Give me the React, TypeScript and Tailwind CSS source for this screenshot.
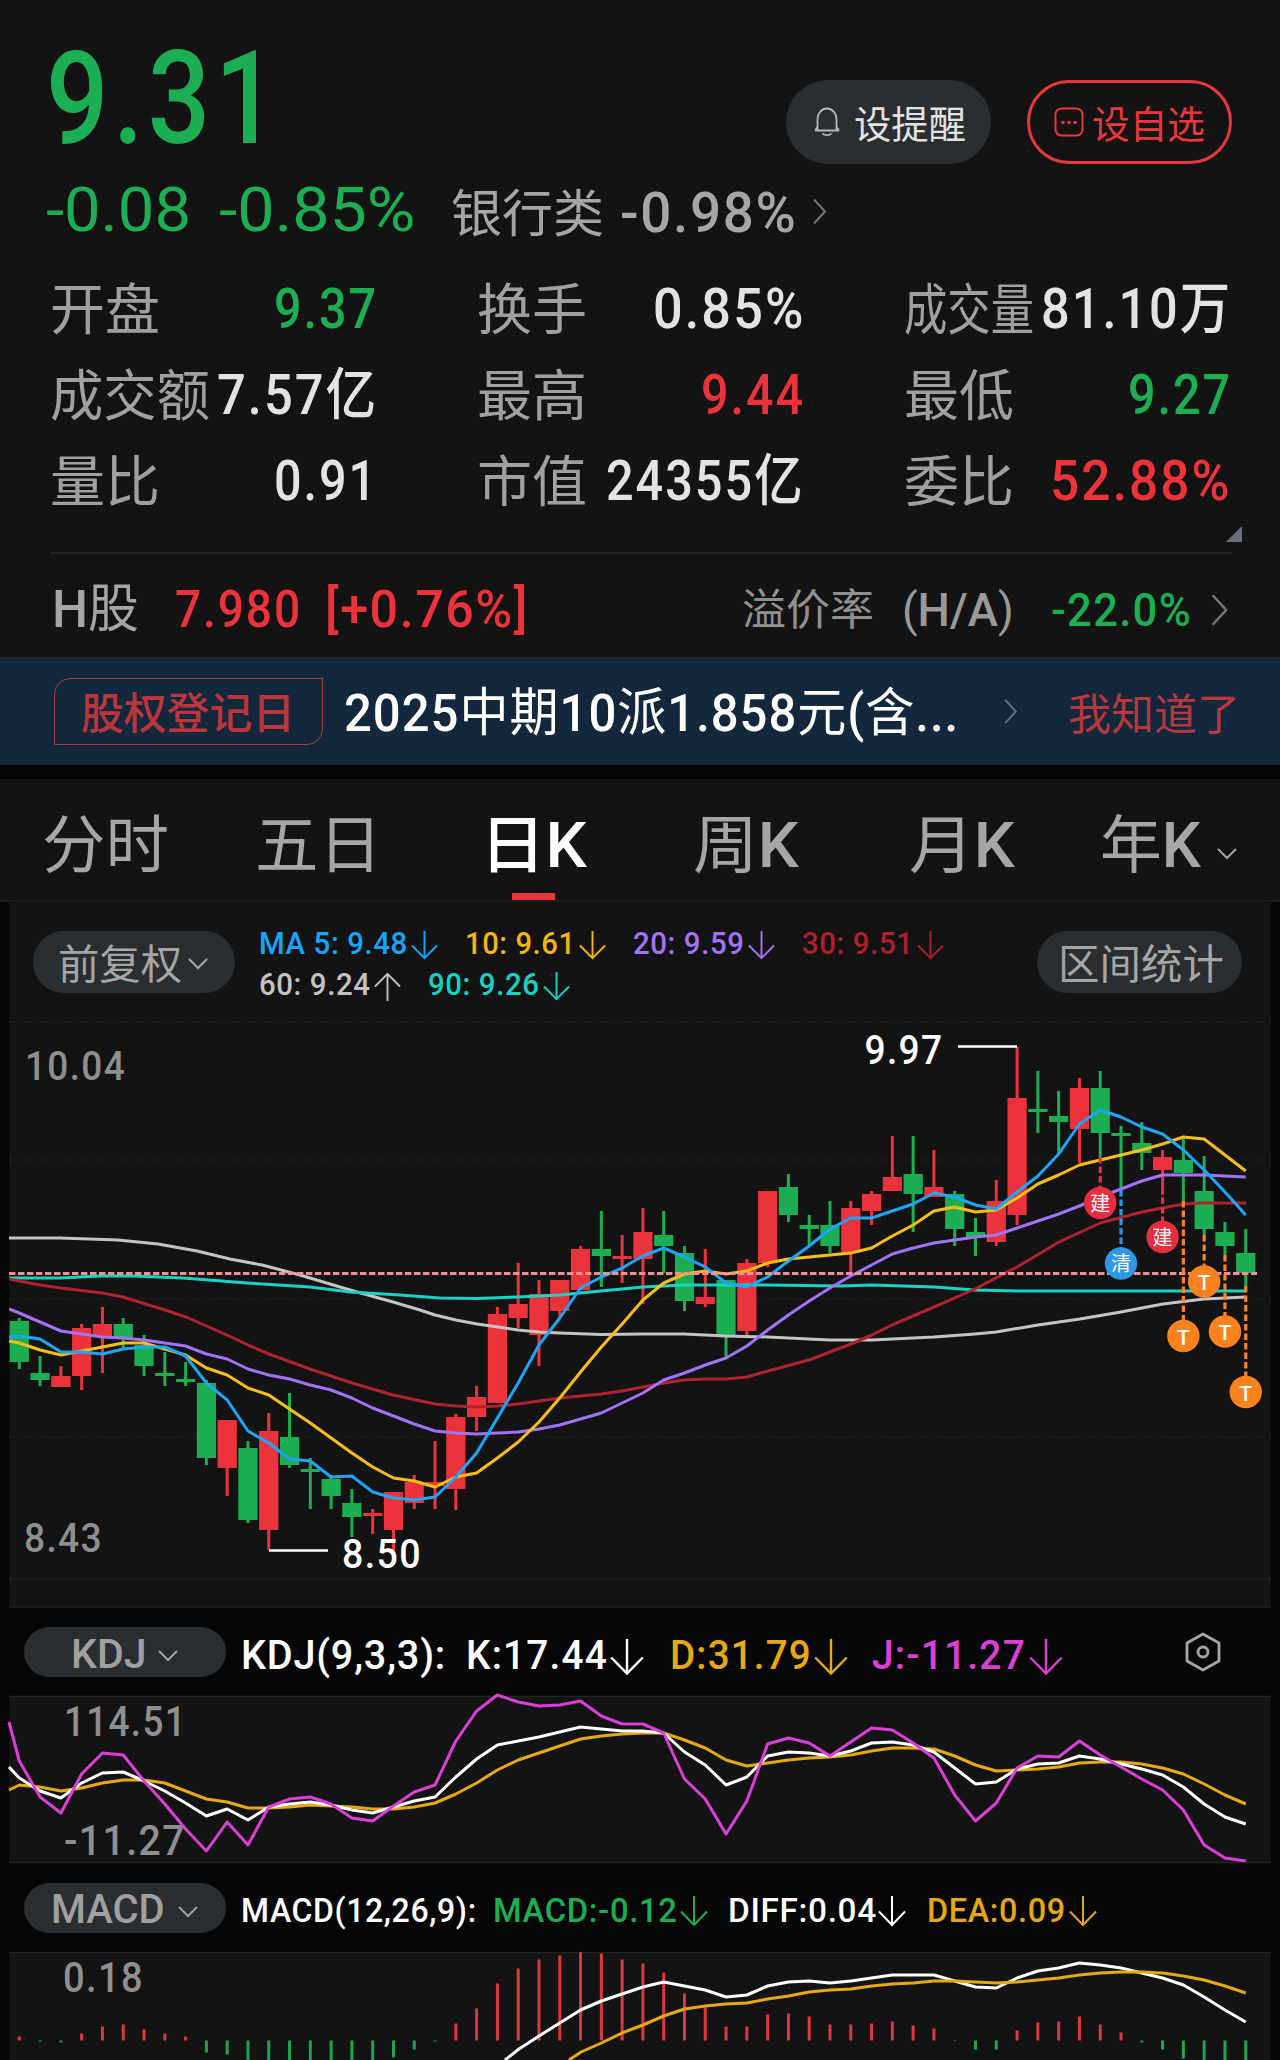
import { useLayoutEffect, useRef, useState } from "react";
import type { ReactNode } from "react";

const UP = "#ec333c";
const DOWN = "#1cae52";

// x position of each trading day
const dayX = (i: number) => 19.3 + i * 20.787;

// [direction, high, body top, body bottom, low]
const candles: [number, number, number, number, number][] = [
  [0, 1318, 1321, 1362, 1369], [0, 1356, 1373, 1380, 1386], [1, 1366, 1376, 1387, 1387],
  [1, 1324, 1328, 1376, 1390], [1, 1307, 1324, 1337, 1373], [0, 1318, 1324, 1338, 1348],
  [0, 1335, 1345, 1366, 1376], [0, 1352, 1373, 1376, 1386], [0, 1362, 1379, 1382, 1386],
  [0, 1380, 1383, 1458, 1465], [1, 1420, 1420, 1468, 1496], [0, 1441, 1448, 1520, 1523],
  [1, 1413, 1431, 1530, 1550], [0, 1393, 1437, 1465, 1468], [0, 1458, 1469, 1472, 1509],
  [0, 1475, 1479, 1496, 1509], [0, 1489, 1503, 1517, 1537], [1, 1509, 1513, 1516, 1534],
  [1, 1492, 1492, 1530, 1550], [1, 1475, 1482, 1503, 1509], [1, 1441, 1482, 1486, 1509],
  [1, 1414, 1417, 1489, 1510], [1, 1386, 1397, 1417, 1431], [1, 1307, 1314, 1403, 1403],
  [1, 1263, 1304, 1318, 1328], [1, 1280, 1294, 1335, 1366], [1, 1280, 1280, 1311, 1317],
  [1, 1246, 1249, 1290, 1290], [0, 1211, 1249, 1256, 1287], [1, 1235, 1256, 1259, 1283],
  [1, 1208, 1232, 1259, 1304], [0, 1211, 1235, 1246, 1273], [0, 1246, 1253, 1301, 1311],
  [1, 1249, 1297, 1304, 1307], [0, 1280, 1280, 1335, 1358], [1, 1259, 1263, 1331, 1335],
  [1, 1191, 1191, 1263, 1267], [0, 1174, 1187, 1215, 1222], [0, 1215, 1225, 1229, 1246],
  [0, 1201, 1225, 1246, 1253], [1, 1201, 1208, 1253, 1273], [1, 1191, 1194, 1211, 1225],
  [1, 1136, 1177, 1191, 1191], [0, 1136, 1174, 1194, 1232], [1, 1150, 1187, 1197, 1197],
  [0, 1191, 1194, 1229, 1246], [0, 1218, 1232, 1237, 1256], [1, 1180, 1201, 1242, 1246],
  [1, 1047, 1098, 1215, 1225], [0, 1071, 1109, 1112, 1133], [0, 1091, 1116, 1122, 1153],
  [1, 1078, 1088, 1129, 1163], [0, 1071, 1088, 1133, 1157], [0, 1126, 1133, 1136, 1190],
  [0, 1122, 1143, 1153, 1170], [1, 1150, 1157, 1170, 1188], [0, 1138, 1160, 1173, 1201],
  [0, 1156, 1191, 1229, 1235], [0, 1222, 1232, 1246, 1255], [0, 1229, 1253, 1273, 1286],
];

// Daily series: the first value sits on the left edge, then one per day
const ma5 = [
  1337, 1336, 1339, 1352, 1352, 1354, 1349, 1347, 1347, 1356, 1383, 1400, 1431, 1443, 1459, 1461,
  1477, 1476, 1492, 1498, 1500, 1497, 1477, 1453, 1418, 1383, 1345, 1318, 1288, 1277, 1268, 1256,
  1248, 1257, 1267, 1283, 1287, 1277, 1261, 1246, 1229, 1218, 1218, 1211, 1204, 1193, 1197, 1205,
  1209, 1192, 1176, 1154, 1124, 1110, 1117, 1127, 1134, 1150, 1170, 1192, 1215,
];
const ma10 = [
  1341, 1343, 1350, 1355, 1351, 1347, 1343, 1343, 1349, 1355, 1368, 1375, 1388, 1395, 1409, 1423,
  1438, 1453, 1467, 1478, 1481, 1487, 1477, 1473, 1458, 1442, 1422, 1398, 1372, 1347, 1324, 1300,
  1283, 1274, 1271, 1274, 1271, 1263, 1259, 1257, 1255, 1253, 1248, 1236, 1225, 1211, 1207, 1212,
  1210, 1198, 1184, 1175, 1165, 1160, 1155, 1150, 1144, 1137, 1139, 1155, 1171,
];
const ma20 = [
  1309, 1313, 1322, 1331, 1334, 1337, 1338, 1340, 1343, 1346, 1354, 1359, 1369, 1375, 1379, 1385,
  1390, 1398, 1408, 1416, 1424, 1431, 1433, 1434, 1433, 1432, 1429, 1425, 1419, 1413, 1403, 1393,
  1380, 1373, 1365, 1358, 1346, 1330, 1315, 1301, 1288, 1276, 1265, 1254, 1248, 1243, 1240, 1237,
  1235, 1228, 1221, 1214, 1206, 1197, 1189, 1181, 1175, 1175, 1175, 1176, 1177,
];
const kdjJ = [
  1722, 1761, 1797, 1813, 1774, 1753, 1755, 1781, 1804, 1829, 1851, 1822, 1845, 1807, 1799, 1797,
  1804, 1818, 1821, 1806, 1792, 1785, 1741, 1711, 1695, 1702, 1706, 1705, 1701, 1716, 1724, 1724,
  1733, 1779, 1799, 1834, 1801, 1744, 1738, 1743, 1756, 1742, 1728, 1730, 1743, 1758, 1795, 1821,
  1803, 1768, 1756, 1757, 1741, 1755, 1767, 1779, 1790, 1810, 1845, 1858, 1861,
];
const kdjK = [
  1767, 1778, 1791, 1798, 1783, 1773, 1772, 1781, 1791, 1803, 1816, 1809, 1820, 1807, 1804, 1802,
  1805, 1810, 1813, 1807, 1801, 1797, 1777, 1759, 1745, 1741, 1737, 1732, 1727, 1729, 1731, 1731,
  1733, 1752, 1765, 1785, 1777, 1756, 1752, 1753, 1756, 1751, 1743, 1742, 1745, 1752, 1768, 1784,
  1782, 1769, 1764, 1763, 1756, 1759, 1764, 1769, 1775, 1787, 1804, 1817, 1824,
];
const kdjD = [
  1790, 1785, 1787, 1791, 1788, 1783, 1780, 1780, 1783, 1791, 1799, 1802, 1808, 1808, 1807, 1805,
  1806, 1807, 1809, 1809, 1807, 1803, 1794, 1783, 1770, 1760, 1753, 1746, 1739, 1736, 1734, 1733,
  1733, 1740, 1748, 1760, 1766, 1763, 1760, 1758, 1757, 1755, 1751, 1748, 1748, 1749, 1756, 1765,
  1771, 1770, 1769, 1767, 1763, 1762, 1762, 1764, 1768, 1774, 1784, 1795, 1804,
];

const macdBars = [
  4, -1, -2, 7, 14, 16, 11, 7, 4, -12, -14, -24, -28, -30, -30, -28, -26, -22, -17, -9, -1, 17, 32,
  57, 72, 81, 85, 90, 87, 81, 77, 68, 47, 33, 14, 14, 26, 27, 24, 16, 16, 17, 19, 15, 12, 0.5, -9,
  -9, 10, 18, 19, 24, 16, 8, -2, -9, -18, -24, -28, -30,
];
const diff = [
  2036, 2023, 2010, 2001, 1994, 1987, 1982, 1986, 1990, 1997, 1995, 1986, 1982, 1981, 1983, 1981,
  1978, 1975, 1975, 1975, 1981, 1987, 1988, 1978, 1971, 1968, 1963, 1965, 1968, 1973, 1978, 1985,
  1997, 2010, 2022,
];
const dea = [
  2043, 2033, 2025, 2016, 2009, 2006, 2004, 2003, 1999, 1996, 1992, 1990, 1989, 1986, 1984, 1983,
  1981, 1981, 1982, 1983, 1982, 1980, 1978, 1975, 1973, 1972, 1972, 1973, 1976, 1980, 1986, 1993,
];

const daily = (ys: number[]) => ys.map((y, i) => `${i === 0 ? 9 : dayX(i - 1)},${y}`).join(" ");
const from = (start: number, ys: number[]) => ys.map((y, i) => `${dayX(start + i)},${y}`).join(" ");

// [day, stem start, badge centre, colour, label]
const trades: [number, number, number, string, string][] = [
  [52, 1157, 1203, "#e62e41", "建"],
  [53, 1190, 1263.5, "#2e97ea", "清"],
  [55, 1188, 1237, "#e62e41", "建"],
  [56, 1201, 1336, "#fb821c", "T"],
  [57, 1235, 1281.5, "#fb821c", "T"],
  [58, 1255, 1331.5, "#fb821c", "T"],
  [59, 1286, 1392, "#fb821c", "T"],
];

// Condenses or widens its text so that it fills the box width exactly
function Fit({ className = "", children }: { className?: string; children: ReactNode }) {
  const box = useRef<HTMLSpanElement>(null);
  const text = useRef<HTMLSpanElement>(null);
  const [scale, setScale] = useState(1);

  useLayoutEffect(() => {
    if (box.current && text.current) {
      setScale(box.current.clientWidth / text.current.offsetWidth);
    }
  }, [children]);

  return (
    <span ref={box} className={`inline-block shrink-0 whitespace-nowrap leading-none ${className}`}>
      <span ref={text} className="inline-block origin-left" style={{ transform: `scaleX(${scale})` }}>
        {children}
      </span>
    </span>
  );
}

function Arrow({ up = false, className = "" }: { up?: boolean; className?: string }) {
  return (
    <svg viewBox="0 0 28 30" preserveAspectRatio="none" fill="none" stroke="currentColor" strokeWidth="2" className={`shrink-0 ${className}`}>
      <path d={up ? "M14 30V2M1 15L14 2l13 13" : "M14 0v28M1 15l13 13 13-13"} />
    </svg>
  );
}

function Chevron({ className = "" }: { className?: string }) {
  return (
    <svg viewBox="0 0 14 26" fill="none" stroke="currentColor" strokeWidth="2" className={`shrink-0 ${className}`}>
      <path d="M1 1l11 12L1 25" />
    </svg>
  );
}

function Caret({ className = "" }: { className?: string }) {
  return (
    <svg viewBox="0 0 20 12" fill="none" stroke="currentColor" strokeWidth="2" className={`h-3 w-5 shrink-0 ${className}`}>
      <path d="M1 1l9 9 9-9" />
    </svg>
  );
}

const stats = [
  { label: "开盘", lw: "w-[110px]", value: "9.37", vw: "w-[104px]", color: "text-[#1cae52]" },
  { label: "换手", lw: "w-[110px]", value: "0.85%", vw: "w-[152px]", color: "text-[#e3e3e3]" },
  { label: "成交量", lw: "w-[130px] text-[43px]", value: "81.10万", vw: "w-[191px]", color: "text-[#e3e3e3]" },
  { label: "成交额", lw: "w-[160px]", value: "7.57亿", vw: "w-[161px]", color: "text-[#e3e3e3]" },
  { label: "最高", lw: "w-[110px]", value: "9.44", vw: "w-[104px]", color: "text-[#ec333c]" },
  { label: "最低", lw: "w-[110px]", value: "9.27", vw: "w-[104px]", color: "text-[#1cae52]" },
  { label: "量比", lw: "w-[110px]", value: "0.91", vw: "w-[104px]", color: "text-[#e3e3e3]" },
  { label: "市值", lw: "w-[110px]", value: "24355亿", vw: "w-[199px]", color: "text-[#e3e3e3]" },
  { label: "委比", lw: "w-[110px]", value: "52.88%", vw: "w-[182px]", color: "text-[#ec333c]" },
];

function Quote() {
  return (
    <section className="h-[657px] bg-[#131313]">
      <div className="flex h-[165px] items-start pr-12 pl-[46px]">
        <Fit className="mt-[34px] w-[236px] text-[130px] font-medium tracking-[0.04em] text-[#1cae52]">9.31</Fit>
        <button className="mt-20 ml-auto flex h-[84px] w-[205px] items-center rounded-full bg-[#2a2e31] pl-7 text-[#e3e3e3]">
          <svg viewBox="0 0 26 30" fill="none" stroke="#b5b8ba" strokeWidth="1.8" className="h-[30px] w-[26px]">
            <path d="M1 23.5h24M3.5 23V12a9.5 10.5 0 0 1 19 0v11M8.5 26.5a5 3 0 0 0 9 0" />
            <path d="M3.5 20L1 23.5M22.5 20L25 23.5" />
          </svg>
          <Fit className="ml-3.5 w-[112px] pt-1.5 text-[38px]">设提醒</Fit>
        </button>
        <button className="mt-20 ml-9 flex h-[84px] w-[205px] items-center rounded-full border-3 border-[#e8383c] pl-6 text-[#e8383c]">
          <svg viewBox="0 0 30 30" fill="none" stroke="currentColor" strokeWidth="2" className="h-[30px] w-[30px]">
            <rect x="1.5" y="1.5" width="27" height="27" rx="6" />
            <path d="M7.5 15.5h3M13.5 15.5h3M19.5 15.5h3" strokeWidth="3" />
          </svg>
          <Fit className="ml-2 w-[113px] pt-1.5 text-[38px]">设自选</Fit>
        </button>
      </div>

      <div className="mb-3.5 flex h-[86px] items-center pl-[46px]">
        <Fit className="mt-[3px] w-[145px] text-[62px] text-[#1cae52]">-0.08</Fit>
        <Fit className="mt-[3px] ml-[28px] w-[196px] text-[62px] text-[#1cae52]">-0.85%</Fit>
        <Fit className="mt-[13px] ml-[36px] w-[153px] text-[51px] text-[#a6a6a6]">银行类</Fit>
        <Fit className="mt-[9px] ml-[16px] w-[177px] text-[56px] font-medium tracking-[0.03em] text-[#a6a6a6]">-0.98%</Fit>
        <Chevron className="mt-1.5 ml-[16px] h-[27px] w-[14px] text-[#777]" />
      </div>

      <div className="grid grid-cols-3 gap-x-[102px] pr-[51px] pl-[50px]">
        {stats.map((s) => (
          <div key={s.label} className="flex h-[86px] items-center justify-between pt-1 whitespace-nowrap">
            <Fit className={`text-[55px] text-[#a0a0a0] ${s.lw}`}>{s.label}</Fit>
            <Fit className={`-mr-[3px] -mt-0.5 text-[56px] font-medium tracking-[0.04em] ${s.vw} ${s.color}`}>{s.value}</Fit>
          </div>
        ))}
      </div>

      <div className="mr-12 ml-[50px] flex h-[31px] justify-end border-b-2 border-[#212121]">
        <svg viewBox="0 0 16 16" className="-mr-2.5 mt-[3px] h-4 w-4">
          <path d="M16 0v16H0z" fill="#6b6e7c" />
        </svg>
      </div>

      <div className="flex h-[103px] items-center pt-2 pl-[52px]">
        <Fit className="w-[87px] text-[52px] text-[#a6a6a6]">
          <span className="font-medium">H</span>股
        </Fit>
        <Fit className="ml-9 w-[127px] text-[52px] font-medium tracking-[0.04em] text-[#ec333c]">7.980</Fit>
        <Fit className="ml-[23px] w-[204px] text-[52px] font-medium tracking-[0.03em] text-[#ec333c]">[+0.76%]</Fit>
        <Fit className="mt-0.5 ml-[213px] w-[132px] text-[43px] text-[#909090]">溢价率</Fit>
        <Fit className="ml-[28px] w-[112px] text-[46px] text-[#999]">
          (<span className="font-medium">H/A</span>)
        </Fit>
        <Fit className="ml-[37px] w-[141px] text-[46px] font-medium tracking-[0.03em] text-[#1cae52]">-22.0%</Fit>
        <Chevron className="ml-[19px] h-8 w-[18px] text-[#777]" />
      </div>
    </section>
  );
}

function Notice() {
  return (
    <section className="flex h-[108px] items-center bg-[#13273d] pl-[54px]">
      <div className="mt-px flex h-[67px] w-[269px] items-center rounded-tl-2xl rounded-br-2xl border-[1.5px] border-[#a93d46] pt-1.5 pl-[26px]">
        <Fit className="w-[214px] text-[43px] font-medium text-[#bb363c]">股权登记日</Fit>
      </div>
      <Fit className="mt-1.5 ml-[21px] w-[615px] text-[52px] font-medium tracking-[0.02em] text-white">
        2025<span className="font-normal">中期</span>10<span className="font-normal">派</span>1.858
        <span className="font-normal">元</span>(<span className="font-normal">含</span>...
      </Fit>
      <Chevron className="ml-[45px] h-[25px] w-[14px] text-[#5f7488]" />
      <Fit className="mt-2 ml-[50px] w-[172px] text-[43px] text-[#b7373c]">我知道了</Fit>
    </section>
  );
}

const tabs = [
  { name: "分时", cls: "ml-[42px] w-[127px]" },
  { name: "五日", cls: "ml-[86px] w-[127px]" },
  { name: "周K", cls: "ml-[106px] w-[106px]" },
  { name: "月K", cls: "ml-[110px] w-[106px]" },
  { name: "年K", cls: "ml-[85px] w-[101px]" },
];

function Tabs() {
  return (
    <nav className="flex h-[123px] items-center border-b-2 border-[#1c1c1c] bg-[#131313] text-[63px] text-[#a6a6a6]">
      {tabs.slice(0, 2).map((t) => (
        <Fit key={t.name} className={`mt-3 ${t.cls}`}>{t.name}</Fit>
      ))}
      <div className="relative ml-[98px] flex h-full items-center">
        <Fit className="mt-3 w-[107px] font-medium text-white">日K</Fit>
        <span className="absolute bottom-0 left-8 h-[7px] w-[43px] bg-[#e8383c]" />
      </div>
      {tabs.slice(2).map((t) => (
        <Fit key={t.name} className={`mt-3 ${t.cls}`}>
          {t.name[0]}
          <span className="font-medium">{t.name[1]}</span>
        </Fit>
      ))}
      <Caret className="mt-7 ml-4" />
    </nav>
  );
}

const averages = [
  [
    { text: "MA 5: 9.48", cls: "text-[#14a5fc]", w: "w-[149px]", up: false },
    { text: "10: 9.61", cls: "text-[#f2b511]", w: "w-[111px]", up: false },
    { text: "20: 9.59", cls: "text-[#a272f8]", w: "w-[112px]", up: false },
    { text: "30: 9.51", cls: "text-[#ae202c]", w: "w-[112px]", up: false },
  ],
  [
    { text: "60: 9.24", cls: "text-[#c2c2c2]", w: "w-[112px]", up: true },
    { text: "90: 9.26", cls: "text-[#14d2c1]", w: "w-[112px]", up: false },
  ],
];

function PriceChart() {
  return (
    <section className="mx-[9px] h-[706px] bg-[#131313]">
      <div className="flex h-[110px] items-start pt-[29px] pr-[29px] pl-6">
        <button className="flex h-[62px] w-[202px] items-center rounded-full bg-[#2a2e31] pl-[24px] text-[#a6a6a6]">
          <Fit className="mt-1.5 w-[124px] text-[41px]">前复权</Fit>
          <Caret className="mt-1 ml-[7px]" />
        </button>
        <div className="ml-[24px] text-[31px] font-medium tracking-[0.02em]">
          {averages.map((line, i) => (
            <div key={i} className="flex h-[41px] items-start">
              {line.map((m) => (
                <div key={m.text} className={`mr-[27px] flex items-start ${m.cls}`}>
                  <Fit className={`-mt-[3px] ${m.w}`}>{m.text}</Fit>
                  <Arrow up={m.up} className="ml-[3px] h-[29px] w-[27px]" />
                </div>
              ))}
            </div>
          ))}
        </div>
        <button className="ml-auto flex h-[62px] w-[205px] items-center justify-center rounded-full bg-[#2a2e31] text-[#a6a6a6]">
          <Fit className="mt-1.5 w-[166px] text-[41px]">区间统计</Fit>
        </button>
      </div>

      <svg viewBox="9 1012 1262 596" className="block h-[596px] w-full" fill="none" strokeLinejoin="round">
        {[1022, 1160, 1299, 1437].map((y) => (
          <path key={y} d={`M9 ${y}H1271`} stroke="#1d1d1d" strokeWidth="1.5" strokeDasharray="10 4" />
        ))}
        <path d="M9 1579H1271M9 1607H1271" stroke="#1f1f1f" strokeWidth="1.5" />

        {candles.map(([up, high, top, bottom, low], i) => (
          <g key={i} fill={up ? UP : DOWN}>
            <rect x={dayX(i) - 1.5} y={high} width="3" height={low - high} />
            <rect x={Math.max(9, dayX(i) - 9.6)} y={top} width="19.2" height={bottom - top} />
          </g>
        ))}

        <g strokeWidth="3">
          <polyline stroke="#c4c4c4" points="9,1238 60,1238 118,1240 158,1244 197,1251 230,1259 262,1265 300,1275 350,1290 393,1302 420,1310 435,1315 456,1320 477,1324 498,1327 518,1330 539,1332 560,1333 601,1334.5 643,1334 684,1334 705,1335 726,1336 768,1337 809,1339 830,1340 872,1340 892,1339 934,1337 975,1334 996,1332 1038,1325 1080,1319 1121,1312 1163,1304 1204,1299 1246,1297" />
          <polyline stroke="#17d3c3" points="9,1278 60,1278 100,1276 133,1276 183,1278 247,1283 310,1287 350,1292 400,1295 440,1298 477,1298.5 518,1297 560,1295 580,1293 643,1287 684,1285 768,1285 840,1286 872,1285 934,1287 975,1290 1017,1291 1246,1291" />
          <polyline stroke="#b0222e" points="9,1279 40,1285 61,1288 102,1293 123,1297 165,1310 186,1317 227,1335 248,1345 269,1354 310,1369 352,1383 393,1395 435,1404 456,1406 477,1407 498,1406 518,1404 560,1398 601,1394 622,1391 643,1387 664,1383 684,1380 705,1379 726,1379 747,1377 768,1371 809,1360 830,1352 851,1344 872,1335 892,1325 934,1307 975,1289 1017,1267 1059,1242 1100,1223 1142,1212 1183,1204 1204,1203 1246,1203" />
          <polyline stroke="#a272f8" points={daily(ma20)} />
          <polyline stroke="#f9be14" points={daily(ma10)} />
          <polyline stroke="#1ba6f8" points={daily(ma5)} />
        </g>

        <path d="M9 1273.5H1257" stroke="#f39093" strokeWidth="3" strokeDasharray="6.4 2.6" />

        {trades.map(([day, y1, y2, color, label]) => (
          <g key={day}>
            <path d={`M${dayX(day)} ${y1}V${y2}`} stroke={color} strokeWidth="3.2" strokeDasharray="6.5 3" />
            <circle cx={dayX(day)} cy={y2} r="16.2" fill={color} />
            <text x={dayX(day)} y={label === "T" ? y2 + 8.5 : y2 + 7.5} textAnchor="middle" fontSize={label === "T" ? 21 : 20} fontWeight={label === "T" ? 500 : 400} fill="#fff">
              {label}
            </text>
          </g>
        ))}

        <path d="M269 1550.5H328M958 1046.5H1017" stroke="#fff" strokeWidth="2.6" />
        <g fontSize="41" letterSpacing="1.5">
          <text x="25" y="1080" textLength="101" lengthAdjust="spacingAndGlyphs" fontWeight="500" fill="#8f8f8f">10.04</text>
          <text x="24" y="1552" textLength="79" lengthAdjust="spacingAndGlyphs" fontWeight="500" fill="#8f8f8f">8.43</text>
          <text x="864.5" y="1064" textLength="79" lengthAdjust="spacingAndGlyphs" fontWeight="500" fill="#fff">9.97</text>
          <text x="342" y="1568" textLength="80" lengthAdjust="spacingAndGlyphs" fontWeight="500" fill="#fff">8.50</text>
        </g>
      </svg>
    </section>
  );
}

function KdjPanel() {
  return (
    <section>
      <div className="flex h-[88px] items-center pl-6 text-[41px] font-medium">
        <button className="flex h-[50px] w-[202px] items-center rounded-full bg-[#2a2e31] pl-[47px] text-[#a0a0a0]">
          <Fit className="mt-1 w-[75px]">KDJ</Fit>
          <Caret className="mt-2 ml-3" />
        </button>
        <Fit className="mt-1.5 ml-[15px] w-[205px] tracking-[0.02em] text-white">KDJ(9,3,3):</Fit>
        <Fit className="mt-1.5 ml-[20px] w-[142px] tracking-[0.03em] text-white">K:17.44</Fit>
        <Arrow className="mt-2.5 ml-[2px] h-[37px] w-[34px] text-white" />
        <Fit className="mt-1.5 ml-[26px] w-[142px] tracking-[0.03em] text-[#e6a90f]">D:31.79</Fit>
        <Arrow className="mt-2.5 ml-[2px] h-[37px] w-[34px] text-[#e6a90f]" />
        <Fit className="mt-1.5 ml-[24px] w-[154px] tracking-[0.03em] text-[#dc3fd8]">J:-11.27</Fit>
        <Arrow className="mt-2.5 ml-[3px] h-[37px] w-[34px] text-[#dc3fd8]" />
        <svg viewBox="0 0 36 40" fill="none" stroke="#a6a6a6" strokeWidth="2.8" strokeLinejoin="round" className="ml-[122px] h-10 w-9">
          <path d="M18 2l16 9v18l-16 9-16-9V11z" />
          <circle cx="18" cy="20" r="5" />
        </svg>
      </div>
      <svg viewBox="9 1696 1262 167" className="mx-[9px] block h-[167px] w-[1262px] overflow-visible bg-[#131313]" fill="none" strokeWidth="3" strokeLinejoin="round">
        <path d="M9 1696.5H1271M9 1862.5H1271" stroke="#242424" strokeWidth="1.5" />
        <g fontSize="42" fill="#8f8f8f" stroke="none" fontWeight="500" letterSpacing="1.5">
          <text x="64" y="1736" textLength="123" lengthAdjust="spacingAndGlyphs">114.51</text>
          <text x="64" y="1855" textLength="122" lengthAdjust="spacingAndGlyphs">-11.27</text>
        </g>
        <polyline stroke="#e6a90f" points={daily(kdjD)} />
        <polyline stroke="#fff" points={daily(kdjK)} />
        <polyline stroke="#dc3fd8" points={daily(kdjJ)} />
      </svg>
    </section>
  );
}

function MacdPanel() {
  return (
    <section>
      <div className="flex h-[89px] items-center pl-6 text-[34px] font-medium">
        <button className="flex h-[50px] w-[202px] items-center rounded-full bg-[#2a2e31] pl-[27px] text-[#a0a0a0]">
          <Fit className="mt-1 w-[114px] text-[41px]">MACD</Fit>
          <Caret className="mt-2 ml-[13px]" />
        </button>
        <Fit className="mt-1 ml-[15px] w-[236px] tracking-[0.02em] text-white">MACD(12,26,9):</Fit>
        <Fit className="mt-1 ml-[16px] w-[184px] tracking-[0.02em] text-[#1cae52]">MACD:-0.12</Fit>
        <Arrow className="mt-2 ml-[3px] h-[31px] w-[28px] text-[#1cae52]" />
        <Fit className="mt-1 ml-[20px] w-[149px] tracking-[0.02em] text-white">DIFF:0.04</Fit>
        <Arrow className="mt-2 ml-px h-[31px] w-[28px] text-white" />
        <Fit className="mt-1 ml-[21px] w-[139px] tracking-[0.02em] text-[#e6a90f]">DEA:0.09</Fit>
        <Arrow className="mt-2 ml-[3px] h-[31px] w-[28px] text-[#e6a90f]" />
      </div>
      <svg viewBox="9 1952 1262 108" className="mx-[9px] block h-[108px] w-[1262px] bg-[#131313]" fill="none" strokeWidth="3" strokeLinejoin="round">
        <path d="M9 1952.5H1271" stroke="#242424" strokeWidth="1.5" />
        <text x="63" y="1992" fontSize="42" fontWeight="500" letterSpacing="1.5" fill="#8f8f8f" textLength="81" lengthAdjust="spacingAndGlyphs">0.18</text>
        {macdBars.map((h, i) => (
          <rect key={i} x={dayX(i) - 1.5} y={h > 0 ? 2040.5 - h : 2040.5} width="3" height={Math.abs(h)} fill={h > 0 ? "#dc3840" : "#1fa552"} />
        ))}
        <polyline stroke="#fff" points={`505,2060 519,2049 ${from(25, diff)}`} />
        <polyline stroke="#e6a90f" points={`569,2060 581,2052 ${from(28, dea)}`} />
      </svg>
    </section>
  );
}

export default function App() {
  return (
    <main className="h-[2060px] w-[1280px] overflow-hidden bg-[#060606] font-['Roboto','Noto_Sans_CJK_SC',sans-serif]">
      <Quote />
      <Notice />
      <div className="h-3.5" />
      <Tabs />
      <PriceChart />
      <KdjPanel />
      <MacdPanel />
    </main>
  );
}
